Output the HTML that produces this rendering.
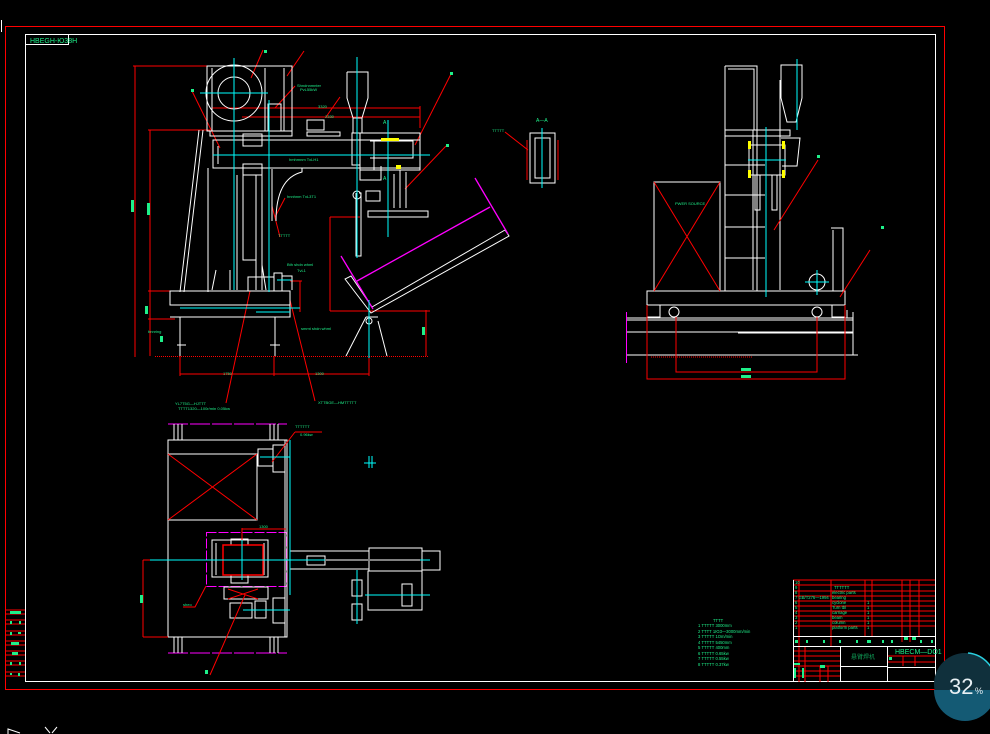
<!DOCTYPE html>
<html><head><meta charset="utf-8"><style>
html,body{margin:0;padding:0;background:#000;width:990px;height:734px;overflow:hidden}
svg{display:block}
text{font-family:"Liberation Sans","Noto Sans CJK SC",sans-serif;fill:#1ef08a}
</style></head><body>
<svg width="990" height="734" viewBox="0 0 990 734" xmlns="http://www.w3.org/2000/svg" fill="none" stroke-width="1">
<!-- frames -->
<rect x="5.5" y="26.5" width="939" height="663" stroke="#f00"/>
<rect x="25.5" y="34.5" width="910" height="647" stroke="#fff"/>
<line x1="1.5" y1="20" x2="1.5" y2="32" stroke="#fff"/>
<rect x="25.5" y="34.5" width="43" height="10" stroke="#fff"/>
<text x="30" y="43" font-size="7">HBEGH-Ю38H</text>
<!-- left strip -->
<g stroke="#f00"><line x1="5" y1="610" x2="25" y2="610"/><line x1="5" y1="614" x2="25" y2="614"/><line x1="5" y1="620" x2="25" y2="620"/><line x1="5" y1="624" x2="25" y2="624"/><line x1="5" y1="631" x2="25" y2="631"/><line x1="5" y1="635" x2="25" y2="635"/><line x1="5" y1="641" x2="25" y2="641"/><line x1="5" y1="645" x2="25" y2="645"/><line x1="5" y1="651" x2="25" y2="651"/><line x1="5" y1="655" x2="25" y2="655"/><line x1="5" y1="661" x2="25" y2="661"/><line x1="5" y1="665" x2="25" y2="665"/><line x1="5" y1="672" x2="25" y2="672"/><line x1="5" y1="676" x2="25" y2="676"/></g>
<g fill="#1ef08a"><rect x="10" y="611" width="11" height="3"/><rect x="10" y="621" width="2" height="3"/><rect x="19" y="621" width="2" height="3"/><rect x="10" y="632" width="2" height="3"/><rect x="18" y="632" width="3" height="2"/><rect x="11" y="642" width="8" height="3"/><rect x="12" y="652" width="6" height="3"/><rect x="10" y="662" width="2" height="3"/><rect x="19" y="662" width="2" height="3"/><rect x="10" y="673" width="2" height="2"/><rect x="18" y="673" width="2" height="3"/></g>
<path d="M8 734 L8 729 L14 731 L20 733" stroke="#fff"/><path d="M45 727 L50 733 M57 727 L52 733" stroke="#fff"/>

<!-- ===== FRONT VIEW ===== -->
<g stroke="#f00">
<line x1="133" y1="66" x2="208" y2="66"/><line x1="135" y1="66" x2="135" y2="357"/>
<line x1="148" y1="130" x2="210" y2="130"/><line x1="150" y1="130" x2="150" y2="291"/>
<line x1="148" y1="291" x2="180" y2="291"/><line x1="150" y1="291" x2="150" y2="356"/>
<line x1="148" y1="319" x2="175" y2="319"/>
<line x1="212" y1="108" x2="420" y2="108"/><line x1="242" y1="117" x2="420" y2="117"/><line x1="420" y1="106" x2="420" y2="128"/>
<line x1="180" y1="374" x2="369" y2="374"/><line x1="180" y1="356" x2="180" y2="376"/><line x1="274" y1="356" x2="274" y2="376"/><line x1="369" y1="356" x2="369" y2="376"/>
<line x1="330" y1="217" x2="360" y2="217"/><line x1="330" y1="217" x2="330" y2="311"/><line x1="330" y1="311" x2="430" y2="311"/>
<line x1="426" y1="310" x2="426" y2="356"/>
<line x1="300" y1="281" x2="300" y2="312"/><line x1="290" y1="281" x2="302" y2="281"/>
<line x1="263" y1="50" x2="251" y2="78"/><line x1="304" y1="51" x2="287" y2="76"/>
<line x1="192" y1="91" x2="220" y2="148"/><line x1="451" y1="74" x2="415" y2="145"/>
<line x1="446" y1="146" x2="405" y2="189"/><line x1="295" y1="86" x2="275" y2="108"/>
<line x1="272" y1="206" x2="280" y2="237"/><line x1="285" y1="198" x2="275" y2="217"/>
<line x1="250" y1="291" x2="226" y2="403"/><line x1="290" y1="300" x2="315" y2="401"/>
<line x1="340" y1="97" x2="326" y2="117"/>
</g>
<line x1="155" y1="356.5" x2="428" y2="356.5" stroke="#f00" stroke-dasharray="1 1"/>
<g stroke="#fff">
<circle cx="234" cy="93" r="28"/><circle cx="234" cy="93" r="16"/>
<path d="M207 66 H292 V131 H207 Z M212 68 V131 M284 68 V131 M265 68 V131"/>
<path d="M268 104 H281 V131 H268 Z"/>
<path d="M199 130 L180 292 M203 130 L184 292"/>
<path d="M210 131 H292 V136 H210 Z"/>
<path d="M213 140 H420 V168 H213 Z M218 146 V164"/>
<path d="M243 134 H262 V146 H243 Z M243 164 H262 V175 H243 Z"/>
<path d="M237 175 V290 M256 175 V290 M243 175 V260 H256"/>
<path d="M208 168 V292 M262 169 V290"/>
<path d="M286 168 H302 V172 C290 175 276 185 276 221 M272 169 V221"/>
<path d="M307 132 H340 V136 H307 Z M307 168 H420"/>
<path d="M347 72 H368 V98 L362 118 V133 M347 72 V98 L353 118 V133 M353 118 H362"/>
<path d="M352 133 V165 H360 V133 Z"/>
<path d="M360 133 H420 V170 H360 Z M374 140 V170 M360 166 V180 H381 V166"/>
<path d="M370 141 H413 V158 H370"/>
<path d="M368 211 H428 V217 H368 Z"/>
<path d="M359 193 H361 V256 H356 V193"/>
<circle cx="357" cy="195" r="4"/>
<path d="M366 191 H380 V201 H366 Z"/>
<path d="M394 174 V208 M400 170 V208 M406 172 V208"/>
<path d="M307 120 H324 V130 H307 Z"/>
<path d="M170 291 H290 V305 H170 Z M170 305 H290 V317 H170"/>
<path d="M180 317 V356 M177 345 H186 M275 317 V356 M270 345 H280"/>
<path d="M248 277 H274 V291 H248 Z M274 273 H282 V291 H274 Z M282 276 H292 V290"/>
<path d="M216 270 L212 290 M230 270 V290 M262 265 L266 290"/>
<path d="M345 279 L371 313 L509 236 L505 230 L372 307 L351 276 Z"/>
<path d="M346 356 L366 317 M387 356 L378 321 M366 317 H378"/>
<circle cx="369" cy="321" r="3"/>
</g>
<g stroke="#f0f" stroke-width="1.3">
<path d="M341 256 L373 309 M357 281 L490 207 M475 178 L508 234"/>
</g>
<g stroke="#0ff">
<line x1="234" y1="58" x2="234" y2="290"/><line x1="200" y1="93" x2="268" y2="93"/>
<line x1="213" y1="155" x2="430" y2="155"/><line x1="357" y1="57" x2="357" y2="258"/>
<line x1="388" y1="120" x2="388" y2="237"/><line x1="269" y1="100" x2="269" y2="292"/>
<line x1="369" y1="300" x2="369" y2="358"/><line x1="256" y1="312" x2="290" y2="312"/>
<line x1="180" y1="308" x2="300" y2="308"/><line x1="277" y1="280" x2="292" y2="280"/>
</g>
<g fill="#1ef08a" font-size="4">
<text x="297" y="87">Shndnnmnter</text><text x="300" y="91">PvL55kW</text>
<text x="318" y="108">3320</text><text x="325" y="118">2330</text>
<text x="289" y="161">hmhmnm TxLH1</text><text x="287" y="198">hnnhnm TxL3T1</text>
<text x="278" y="237">ТТТТТ</text><text x="287" y="266">Bth shdn whml</text><text x="297" y="272">TvL1</text>
<text x="148" y="333">bnnring</text><text x="301" y="330">smmt shdn whml</text>
<text x="175" y="405">YL7T5G—HJTTT</text><text x="178" y="410">ТТТТ1320—100r/min  0.05kw</text>
<text x="318" y="404">XTTBGE—HMTTTTT</text>
<text x="223" y="375">1750</text><text x="315" y="375">1300</text>
<text x="383" y="124" font-size="5">A</text><text x="383" y="180" font-size="5">A</text>
<text x="492" y="132">ТТТТТ</text><text x="536" y="122" font-size="5">A—A</text>
<text x="675" y="205">PWER SOURCE</text>
</g>
<g fill="#1ef08a"><rect x="145" y="306" width="3" height="8"/><rect x="422" y="327" width="3" height="8"/><rect x="160" y="336" width="3" height="6"/><rect x="131" y="200" width="3" height="12"/><rect x="147" y="203" width="3" height="12"/><rect x="264" y="50" width="3" height="3"/><rect x="450" y="72" width="3" height="3"/><rect x="446" y="144" width="3" height="3"/><rect x="191" y="89" width="3" height="3"/><rect x="205" y="670" width="3" height="4"/></g>
<rect x="381" y="138" width="18" height="3" fill="#ff0"/><rect x="396" y="165" width="5" height="4" fill="#ff0"/>
<!-- A-A section -->
<g stroke="#fff"><path d="M530 133 H555 V183 H530 Z M535 138 H550 V178 H535 Z"/></g>
<g stroke="#f00"><path d="M527 140 V180 M558 140 V180 M505 132 L528 150"/></g>
<line x1="542" y1="128" x2="542" y2="188" stroke="#0ff"/>

<!-- ===== SIDE VIEW ===== -->
<g stroke="#fff">
<path d="M725 66 H757 V291 M725 66 V291 M728 69 H754 V130"/>
<path d="M725 130 H790 V136 H725 Z M725 165 H765 M725 195 H765 M725 227 H765 M725 258 H765"/>
<path d="M753 130 V290 M780 80 V290"/>
<path d="M781 65 H802 V98 L796 122 H787 L781 98 Z"/>
<path d="M781 138 H800 L797 166 H782"/>
<path d="M749 145 H785 V175 H749 Z M755 175 V210 H760 V175 M772 175 V210 H777 V175"/>
<path d="M654 182 H720 V291 H654 Z"/>
<path d="M831 228 H843 V291 M833 230 V291"/>
<circle cx="817" cy="282" r="8"/>
<path d="M647 291 H845 V305 H647 Z M647 305 V317 H660 V305 M832 305 V317 H845 V305"/>
<path d="M627 318 H853 M627 320 H853 M627 332 H853 M738 333 H853 M627 355 H858 M853 312 V355 M847 310 V318"/>
</g>
<circle cx="674" cy="312" r="5" stroke="#fff"/><circle cx="817" cy="312" r="5" stroke="#fff"/>
<g stroke="#f00"><path d="M654 182 L720 291 M720 182 L654 291 M774 230 L818 160 M840 297 L870 250"/>
<path d="M647 305 V379 H845 V305 M676 317 V372 H817 V317"/></g>
<line x1="651" y1="357" x2="753" y2="357" stroke="#f00" stroke-dasharray="1 1"/>
<g stroke="#0ff"><line x1="766" y1="127" x2="766" y2="297"/><line x1="748" y1="160" x2="786" y2="160"/><line x1="797" y1="59" x2="797" y2="130"/><line x1="817" y1="270" x2="817" y2="295"/><line x1="805" y1="282" x2="829" y2="282"/></g>
<g fill="#ff0"><rect x="748" y="141" width="3" height="8"/><rect x="782" y="141" width="3" height="8"/><rect x="748" y="170" width="3" height="8"/><rect x="782" y="170" width="3" height="8"/></g>
<line x1="626.5" y1="312" x2="626.5" y2="363" stroke="#f0f"/>
<g fill="#1ef08a"><rect x="741" y="368" width="10" height="3"/><rect x="741" y="375" width="10" height="3"/><rect x="817" y="155" width="3" height="3"/><rect x="881" y="226" width="3" height="3"/></g>

<!-- ===== TOP VIEW ===== -->
<g stroke="#f0f"><line x1="168" y1="424" x2="287" y2="424" stroke-dasharray="20 2"/><line x1="168" y1="653" x2="287" y2="653" stroke-dasharray="20 2"/>
<rect x="206.5" y="532.5" width="80" height="54" stroke-dasharray="10 2"/></g>
<g stroke="#fff">
<path d="M168 440 H287 V637 H168 Z"/>
<path d="M168 454 H257 V520 H168"/>
<path d="M174 424 V440 M178 424 V440 M182 424 V440 M270 424 V440 M274 424 V440 M278 424 V440"/>
<path d="M174 637 V653 M178 637 V653 M182 637 V653 M270 637 V653 M274 637 V653 M278 637 V653"/>
<path d="M285 440 V637 M290 460 V595"/>
<path d="M258 449 H273 V466 H258 Z M273 445 H285 V472 H273 Z"/>
<path d="M212 540 H268 V577 H212 Z M216 543 V575 M264 543 V575"/>
<path d="M231 539 H248 V545 H231 Z M231 575 H248 V583 H231 Z"/>
<path d="M290 551 H369 V569 H290 Z M307 556 H325 V565 H307 Z"/>
<path d="M369 548 H422 V571 H369 Z M422 551 H440 V570 H422"/>
<path d="M368 571 H422 V610 H368 Z M352 580 H362 V596 H352 Z M352 604 H362 V620 H352 Z M402 584 H412 V606 H402 Z"/>
<path d="M230 603 H252 V618 H230 Z M255 601 H266 V618 H255 Z M273 598 H285 V623 H273 Z"/>
<path d="M224 587 H268 V599 H224 Z"/>
</g>
<rect x="223" y="545" width="40" height="30" stroke="#f00" stroke-width="1.5"/>
<g stroke="#f00"><path d="M168 454 L257 520 M257 454 L168 520 M143 560 V637 M143 560 H290 M143 637 H168 M242 528 V560 M242 529 H286 M295 432 L272 462 M295 432 H322 M206 586 L195 607 H183 M245 595 L210 675 M228 589 L258 599 M258 589 L228 599"/></g>
<line x1="325" y1="560" x2="420" y2="560" stroke="#f00" stroke-width="2"/>
<g stroke="#0ff"><line x1="290" y1="440" x2="290" y2="595"/><line x1="150" y1="560" x2="430" y2="560"/><line x1="242" y1="540" x2="242" y2="580"/><line x1="260" y1="457" x2="290" y2="457"/><line x1="243" y1="610" x2="290" y2="610"/><line x1="357" y1="570" x2="357" y2="624"/><line x1="365" y1="595" x2="430" y2="595"/><line x1="364" y1="463" x2="376" y2="463"/><line x1="369" y1="456" x2="369" y2="468"/><line x1="372" y1="456" x2="372" y2="468"/></g>
<g fill="#1ef08a" font-size="4"><text x="295" y="428">ТТТТТТ</text><text x="300" y="436">0.96kw</text><text x="183" y="606">sheo</text><text x="259" y="528">1300</text></g>
<rect x="140" y="595" width="3" height="8" fill="#1ef08a"/>

<!-- notes -->
<g fill="#1ef08a" font-size="4.2">
<text x="713" y="622">ТТТТ</text>
<text x="698" y="627">1 ТТТТТ  3000mm</text>
<text x="698" y="633">2 ТТТТ  1ЮЗ—3000mm/min</text>
<text x="698" y="638">3 ТТТТТ  1Om/min</text>
<text x="698" y="644">4 ТТТТТ  5450mm</text>
<text x="698" y="649">5 ТТТТТ  400mm</text>
<text x="698" y="655">6 ТТТТТ  0.65kw</text>
<text x="698" y="660">7 ТТТТТ  0.55kw</text>
<text x="698" y="666">8 ТТТТТ  0.37kw</text>
</g>

<!-- ===== TITLE BLOCK ===== -->
<g stroke="#f00">
<line x1="793" y1="580" x2="935" y2="580"/><line x1="793" y1="585" x2="935" y2="585"/><line x1="793" y1="591" x2="935" y2="591"/><line x1="793" y1="596" x2="935" y2="596"/><line x1="793" y1="601" x2="935" y2="601"/><line x1="793" y1="606" x2="935" y2="606"/><line x1="793" y1="611" x2="935" y2="611"/><line x1="793" y1="616" x2="935" y2="616"/><line x1="793" y1="621" x2="935" y2="621"/><line x1="793" y1="626" x2="935" y2="626"/>
<line x1="799" y1="580" x2="799" y2="682"/><line x1="831" y1="580" x2="831" y2="646"/><line x1="865" y1="580" x2="865" y2="636"/><line x1="872" y1="580" x2="872" y2="636"/><line x1="902" y1="580" x2="902" y2="642"/><line x1="910" y1="580" x2="910" y2="642"/><line x1="919" y1="580" x2="919" y2="636"/>
<line x1="793" y1="651" x2="840" y2="651"/><line x1="793" y1="656" x2="840" y2="656"/><line x1="793" y1="661" x2="840" y2="661"/><line x1="793" y1="666" x2="840" y2="666"/><line x1="793" y1="671" x2="840" y2="671"/><line x1="793" y1="676" x2="840" y2="676"/>
<line x1="805" y1="646" x2="805" y2="682"/><line x1="820" y1="666" x2="820" y2="682"/><line x1="828" y1="666" x2="828" y2="682"/>
<line x1="887" y1="656" x2="935" y2="656"/><line x1="887" y1="662" x2="935" y2="662"/><line x1="903" y1="656" x2="903" y2="666"/><line x1="915" y1="656" x2="915" y2="666"/>
</g>
<g stroke="#fff">
<line x1="793.5" y1="580" x2="793.5" y2="682"/><line x1="793" y1="636.5" x2="935" y2="636.5"/><line x1="793" y1="646.5" x2="935" y2="646.5"/>
<line x1="840.5" y1="646" x2="840.5" y2="682"/><line x1="887.5" y1="646" x2="887.5" y2="682"/><line x1="840" y1="666.5" x2="887" y2="666.5"/><line x1="887" y1="667.5" x2="935" y2="667.5"/>
</g>
<g fill="#1ef08a" font-size="4.2">
<text x="795" y="584">10</text><text x="795" y="589">9</text><text x="834" y="589">ТТТТТТ</text>
<text x="795" y="594">8</text><text x="832" y="594">electric parts</text>
<text x="795" y="599">7 GB/T276—1994</text><text x="832" y="599">bearing</text>
<text x="795" y="604">6</text><text x="832" y="604">cyclone</text><text x="867" y="604">1</text>
<text x="795" y="609">5</text><text x="832" y="609">Turn tbl</text><text x="867" y="609">1</text>
<text x="795" y="614">4</text><text x="832" y="614">carriage</text><text x="867" y="614">1</text>
<text x="795" y="619">3</text><text x="832" y="619">beam</text><text x="867" y="619">1</text>
<text x="795" y="624">2</text><text x="832" y="624">column</text><text x="867" y="624">1</text>
<text x="795" y="629">1</text><text x="832" y="629">platform parts</text><text x="867" y="629">1</text>
<text x="851" y="659" font-size="6" style="fill:#0f9a55">悬臂焊机</text>
<text x="895" y="654" font-size="7">HBECM—DO1</text>
</g>
<g fill="#1ef08a"><rect x="795" y="640" width="3" height="3"/><rect x="806" y="640" width="2" height="3"/><rect x="823" y="640" width="2" height="3"/><rect x="839" y="640" width="2" height="3"/><rect x="856" y="640" width="2" height="3"/><rect x="867" y="640" width="4" height="3"/><rect x="882" y="640" width="2" height="3"/><rect x="891" y="640" width="2" height="3"/><rect x="904" y="637" width="4" height="3"/><rect x="912" y="637" width="4" height="3"/><rect x="920" y="640" width="2" height="3"/><rect x="931" y="640" width="2" height="3"/>
<rect x="889" y="657" width="3" height="3"/><rect x="794" y="663" width="6" height="2"/><rect x="794" y="668" width="2" height="10"/><rect x="802" y="668" width="2" height="10"/><rect x="820" y="665" width="5" height="3"/></g>

<!-- progress circle -->
<circle cx="965" cy="684" r="31" fill="#10303c"/>
<path d="M934 690 A31 31 0 0 0 996 690 Z" fill="#145a74"/>
<path d="M968 653 A31 31 0 0 1 996 684" stroke="#2ad0e0" stroke-width="1.5"/>
<text x="949" y="694" font-size="22" style="fill:#e8f0f4">32</text><text x="975" y="694" font-size="9" style="fill:#e8f0f4">%</text>
</svg>
</body></html>
